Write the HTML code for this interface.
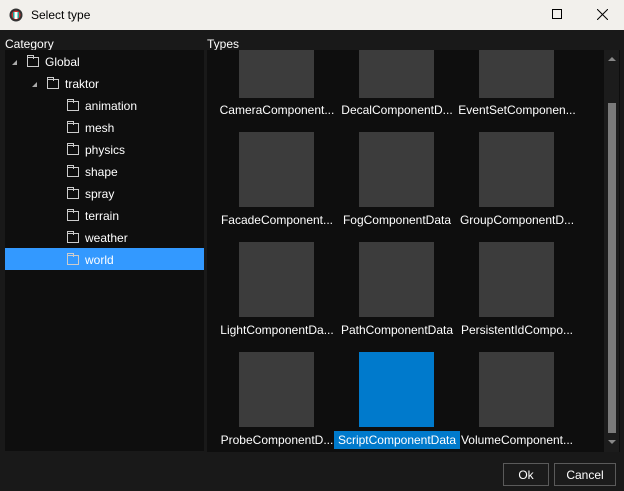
<!DOCTYPE html>
<html><head><style>
*{margin:0;padding:0;box-sizing:border-box}
body{width:624px;height:491px;overflow:hidden;background:#191919;font-family:"Liberation Sans","DejaVu Sans",sans-serif;font-size:12px;color:#fff;position:relative}
.title{position:absolute;left:0;top:0;width:624px;height:30px;background:#f2f0ec;color:#000}
.title span{position:absolute;left:31px;top:8px;font-size:12px}
.hdr{position:absolute;top:37px;font-size:12px;color:#fff}
.cat{position:absolute;left:5px;top:50px;width:199px;height:401px;background:#0e0e0e}
.types{position:absolute;left:207px;top:50px;width:413px;height:402px;background:#0e0e0e;overflow:hidden}
.row{position:absolute;height:22px;line-height:24px;font-size:12px}
.fold{position:absolute;width:12px;height:10px;border:1px solid #ccc;top:6px}
.fold:before{content:"";position:absolute;left:-1px;top:-3px;width:5px;height:3px;border:1px solid #ccc;border-bottom:none}
.tri{position:absolute;width:0;height:0;border-left:5px solid transparent;border-bottom:5px solid #aaa;top:9px}
.tile{position:absolute;width:75px;height:75px;background:#3c3c3c}
.lbl{position:absolute;width:120px;text-align:center;font-size:12px;height:18px;line-height:19px}
.sb{position:absolute;left:604px;top:50px;width:15px;height:402px;background:#1c1c1c}
.btn{position:absolute;top:463px;height:23px;border:1px solid #5a5a5a;background:#1b1b1b;text-align:center;line-height:22px;font-size:12px}
</style></head><body>
<div class="title">
<svg style="position:absolute;left:9px;top:8px" width="14" height="14" viewBox="0 0 14 14"><circle cx="7" cy="7" r="6.5" fill="#333"/><circle cx="7" cy="7" r="4.5" fill="#c33"/><rect x="4" y="4" width="6" height="6" fill="#2a9"/><rect x="5.5" y="4" width="3" height="7" fill="#fff"/></svg>
<span>Select type</span>
<div style="position:absolute;left:552px;top:9px;width:10px;height:10px;border:1px solid #000"></div>
<svg style="position:absolute;left:597px;top:9px" width="11" height="11"><path d="M0 0L11 11M11 0L0 11" stroke="#000" stroke-width="1"/></svg>
</div>
<div class="hdr" style="left:5px">Category</div>
<div class="hdr" style="left:207px">Types</div>
<div class="cat">
<div class="tri" style="left:7px;top:10px"></div>
<div class="fold" style="left:22px;top:7px"></div><div class="row" style="left:40px;top:0">Global</div>
<div class="tri" style="left:27px;top:32px"></div>
<div class="fold" style="left:42px;top:29px"></div><div class="row" style="left:60px;top:22px">traktor</div>
<div style="position:absolute;left:0;top:198px;width:199px;height:22px;background:#3399ff"></div>
<div class="fold" style="left:62px;top:51px"></div><div class="row" style="left:80px;top:44px">animation</div>
<div class="fold" style="left:62px;top:73px"></div><div class="row" style="left:80px;top:66px">mesh</div>
<div class="fold" style="left:62px;top:95px"></div><div class="row" style="left:80px;top:88px">physics</div>
<div class="fold" style="left:62px;top:117px"></div><div class="row" style="left:80px;top:110px">shape</div>
<div class="fold" style="left:62px;top:139px"></div><div class="row" style="left:80px;top:132px">spray</div>
<div class="fold" style="left:62px;top:161px"></div><div class="row" style="left:80px;top:154px">terrain</div>
<div class="fold" style="left:62px;top:183px"></div><div class="row" style="left:80px;top:176px">weather</div>
<div class="fold" style="left:62px;top:205px"></div><div class="row" style="left:80px;top:198px">world</div>
</div>
<div class="types">
<div class="tile" style="left:32px;top:-27px"></div><div class="tile" style="left:152px;top:-27px"></div><div class="tile" style="left:272px;top:-27px"></div>
<div class="lbl" style="left:10px;top:51px">CameraComponent...</div><div class="lbl" style="left:130px;top:51px">DecalComponentD...</div><div class="lbl" style="left:250px;top:51px">EventSetComponen...</div>
<div class="tile" style="left:32px;top:82px"></div><div class="tile" style="left:152px;top:82px"></div><div class="tile" style="left:272px;top:82px"></div>
<div class="lbl" style="left:10px;top:161px">FacadeComponent...</div><div class="lbl" style="left:130px;top:161px">FogComponentData</div><div class="lbl" style="left:250px;top:161px">GroupComponentD...</div>
<div class="tile" style="left:32px;top:192px"></div><div class="tile" style="left:152px;top:192px"></div><div class="tile" style="left:272px;top:192px"></div>
<div class="lbl" style="left:10px;top:271px">LightComponentDa...</div><div class="lbl" style="left:130px;top:271px">PathComponentData</div><div class="lbl" style="left:250px;top:271px">PersistentIdCompo...</div>
<div class="tile" style="left:32px;top:302px"></div><div class="tile" style="left:152px;top:302px;background:#007acc"></div><div class="tile" style="left:272px;top:302px"></div>
<div class="lbl" style="left:10px;top:381px">ProbeComponentD...</div>
<div class="lbl" style="left:127px;top:381px;width:126px;background:#007acc">ScriptComponentData</div>
<div class="lbl" style="left:250px;top:381px">VolumeComponent...</div>
</div>
<div class="sb">
<div style="position:absolute;left:4px;top:7px;border-left:4px solid transparent;border-right:4px solid transparent;border-bottom:4px solid #888"></div>
<div style="position:absolute;left:4px;top:53px;width:8px;height:330px;background:#7a7a7a"></div>
<div style="position:absolute;left:4px;top:390px;border-left:4px solid transparent;border-right:4px solid transparent;border-top:4px solid #888"></div>
</div>
<div class="btn" style="left:503px;width:46px">Ok</div>
<div class="btn" style="left:554px;width:62px">Cancel</div>
</body></html>
